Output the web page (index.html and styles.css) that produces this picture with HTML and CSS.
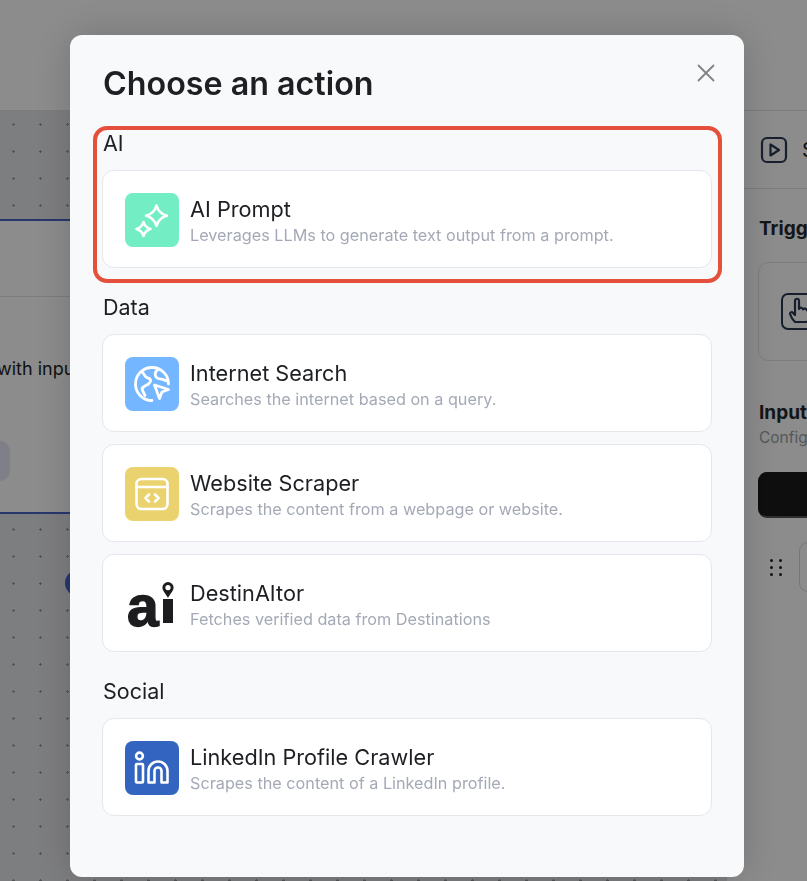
FILE: index.html
```html
<!DOCTYPE html>
<html lang="en">
<head>
    <meta charset="UTF-8">
    <meta name="viewport" content="width=device-width, initial-scale=1.0">
    <title>Choose an action</title>
    <link rel="stylesheet" href="styles.css">
</head>
<body>
    <div class="app">
        <div class="topbar"></div>
        <div class="workspace">
            <div class="canvas">
                <div class="node">
                    <div class="node-head"></div>
                    <div class="node-body">
                        <div class="node-text">with input</div>
                        <div class="node-pill"></div>
                    </div>
                </div>
                <div class="canvas-handle"></div>
            </div>
            <div class="side">
                <div class="side-head">
                    <svg class="side-play" viewBox="0 0 28 28" fill="none" stroke="#2b3a55" stroke-width="2.2" stroke-linejoin="round">
                        <rect x="2" y="2" width="24" height="24" rx="5"/>
                        <path d="M10.5 8.5v11l8.5-5.5z"/>
                    </svg>
                    <span class="side-title">Settings</span>
                </div>
                <div class="side-body">
                    <div class="side-label">Trigger</div>
                    <div class="trigger-card">
                        <div class="trigger-icon">
                            <svg viewBox="0 0 28 28" fill="none" stroke="#2b3a55" stroke-width="2.2" stroke-linecap="round" stroke-linejoin="round">
                                <path d="M8 25c-2-2-4-5-5-8 0-2 2-2.500 3-1l2 2V4c0-3 4-3 4 0v8c1-2 4-1.500 4 .5 1-1.500 4-1 4 1 1-1 3-.5 3 1.500 0 5-1 8-3 10z"/>
                            </svg>
                        </div>
                    </div>
                    <div class="side-label side-label-input">Input</div>
                    <div class="side-hint">Configure</div>
                    <div class="black-btn"></div>
                    <div class="input-row">
                        <div class="drag">
                            <i></i><i></i><i></i><i></i><i></i><i></i>
                        </div>
                        <div class="input-box"></div>
                    </div>
                </div>
            </div>
        </div>
    </div>

    <div class="overlay"></div>

    <div class="modal">
        <div class="modal-head">
            <h1>Choose an action</h1>
            <svg class="close" viewBox="0 0 18 18" fill="none" stroke="#808287" stroke-width="1.800" stroke-linecap="round">
                <path d="M1.500 1.500l15 15M16.500 1.500l-15 15"/>
            </svg>
        </div>

        <div class="section section-marked">
            <div class="section-label">AI</div>
            <div class="action">
                <div class="action-icon icon-ai">
                    <svg viewBox="0 0 54 54" fill="none" stroke="#fff" stroke-width="2.600" stroke-linejoin="round">
                        <path d="M31.500 12.500c1.500 5.500 4.500 8.700 10.500 10.200-6 1.500-9 4.700-10.500 10.300-1.500-5.600-4.500-8.800-10.500-10.300 6-1.500 9-4.700 10.500-10.200z"/>
                        <path d="M18.500 29c1 3.500 3 5.800 7 7-4 1.200-6 3.400-7 7-1-3.600-3-5.800-7-7 4-1.200 6-3.500 7-7z"/>
                    </svg>
                </div>
                <div class="action-text">
                    <div class="action-title">AI Prompt</div>
                    <div class="action-desc">Leverages LLMs to generate text output from a prompt.</div>
                </div>
            </div>
        </div>

        <div class="section">
            <div class="section-label">Data</div>
            <div class="action">
                <div class="action-icon icon-search">
                    <svg viewBox="0 0 54 54" fill="none" stroke="#fff" stroke-width="2.800" stroke-linecap="round" stroke-linejoin="round">
                        <path d="M43.500 27a16.500 16.500 0 1 0-16.500 16.500"/>
                        <path d="M17 14.500l3.500 5c1 1.500 3 1.500 4.500 2.500 1.500 1.500 0 3.500-1.500 5-1.500 1-3.500 1.500-5 3-1.500 1-2 2-1 3.500l2.500 5"/>
                        <path d="M33 12.500c-2.500 2-3.500 5-2 7.500 1.500 2 5 2 7 2.500 1.500.500 3 1.500 4.500 1.500"/>
                        <path d="M29.500 28l14 4.500-6.500 2.500-2.500 6.500z"/>
                    </svg>
                </div>
                <div class="action-text">
                    <div class="action-title">Internet Search</div>
                    <div class="action-desc">Searches the internet based on a query.</div>
                </div>
            </div>
            <div class="action">
                <div class="action-icon icon-web">
                    <svg viewBox="0 0 54 54" fill="none" stroke="#fff" stroke-width="2.600" stroke-linecap="round" stroke-linejoin="round">
                        <rect x="11.500" y="12" width="31" height="30" rx="5"/>
                        <path d="M11.500 20h31"/>
                        <path d="M24 27.500l-3.500 3.500 3.500 3.500M30 27.500l3.500 3.500-3.500 3.500"/>
                    </svg>
                </div>
                <div class="action-text">
                    <div class="action-title">Website Scraper</div>
                    <div class="action-desc">Scrapes the content from a webpage or website.</div>
                </div>
            </div>
            <div class="action">
                <div class="action-icon icon-destin">
                    <span class="destin-mark">a</span>
                    <span class="destin-bar"></span>
                    <svg class="destin-pin" viewBox="0 0 14 20">
                        <path fill-rule="evenodd" fill="#1d1d1f" d="M7 0a7 7 0 0 1 7 7C14 11 9.500 15.500 7 20 4.500 15.500 0 11 0 7A7 7 0 0 1 7 0zm0 3.700a3.300 3.300 0 1 0 0 6.600 3.300 3.300 0 0 0 0-6.600z"/>
                    </svg>
                </div>
                <div class="action-text">
                    <div class="action-title">DestinAItor</div>
                    <div class="action-desc">Fetches verified data from Destinations</div>
                </div>
            </div>
        </div>

        <div class="section">
            <div class="section-label">Social</div>
            <div class="action">
                <div class="action-icon icon-linkedin">
                    <svg viewBox="0 0 54 54" fill="none" stroke="#fff" stroke-width="2.600" stroke-linejoin="round">
                        <circle cx="14.500" cy="15" r="3.400"/>
                        <rect x="11" y="23" width="7" height="18.500" rx="1"/>
                        <path d="M23.500 41.500V30a9.500 9.500 0 0 1 19 0v11.500h-6V30a3.500 3.500 0 0 0-7 0v11.500z"/>
                    </svg>
                </div>
                <div class="action-text">
                    <div class="action-title">LinkedIn Profile Crawler</div>
                    <div class="action-desc">Scrapes the content of a LinkedIn profile.</div>
                </div>
            </div>
        </div>
    </div>
</body>
</html>
```

FILE: styles.css
```css
* {
    box-sizing: border-box;
}
html, body {
    margin: 0;
    padding: 0;
    height: 100%;
    overflow: hidden;
    font-family: Inter, "Liberation Sans", sans-serif;
    color: #1d1f23;
}

/* page behind the dialog */
.app {
    height: 881px;
    display: flex;
    flex-direction: column;
    background-color: #fff;
}
.topbar {
    height: 111px;
    flex: none;
    border-bottom: 1px solid #e1e3e8;
}
.workspace {
    flex: 1;
    display: flex;
    min-height: 0;
}
.canvas {
    width: 726px;
    flex: none;
    padding-top: 108px;
    background-color: #e4e5e8;
    background-image: url("data:image/svg+xml,%3Csvg xmlns='http://www.w3.org/2000/svg' width='27' height='27'%3E%3Cpath d='M12 13.500h3M13.500 12v3' stroke='%239a9ba0' stroke-width='1'/%3E%3C/svg%3E");
    background-position: 0 0;
}
.node {
    height: 295px;
    background-color: #fff;
    border-top: 2px solid #4a63c8;
    border-bottom: 2px solid #4a63c8;
}
.node-head {
    height: 76px;
    border-bottom: 1px solid #e1e3e8;
}
.node-body {
    padding-top: 59px;
}
.node-text {
    font-size: 18px;
    line-height: 26px;
    margin-left: -3px;
    white-space: nowrap;
}
.node-pill {
    width: 10px;
    height: 40px;
    margin-top: 59px;
    background-color: #e6e8f6;
    border-radius: 0 10px 10px 0;
}
.canvas-handle {
    width: 26px;
    height: 26px;
    margin: 56px 0 0 65px;
    border-radius: 50%;
    background-color: #4a63c8;
}

.side {
    flex: 1;
    background-color: #fff;
    border-left: 1px solid #e1e3e8;
    overflow: hidden;
}
.side-head {
    height: 78px;
    display: flex;
    align-items: center;
    gap: 14px;
    padding-left: 33px;
    border-bottom: 1px solid #e1e3e8;
}
.side-play {
    width: 28px;
    height: 28px;
    flex: none;
}
.side-title {
    font-size: 20px;
    white-space: nowrap;
}
.side-body {
    padding: 28px 0 0 31px;
    width: 400px;
}
.side-label {
    margin-left: 1px;
    font-size: 19px;
    font-weight: 700;
    line-height: 24px;
    color: #26282c;
}
.trigger-card {
    width: 300px;
    height: 99px;
    margin-top: 21px;
    padding: 30px 0 0 22px;
    border: 1px solid #e1e3e8;
    border-radius: 10px;
}
.trigger-icon {
    width: 40px;
    height: 37px;
    padding: 2px 4px;
    border: 2px solid #2b3a55;
    border-radius: 7px;
}
.trigger-icon svg {
    display: block;
    width: 28px;
    height: 28px;
}
.side-label-input {
    margin-top: 40px;
}
.side-hint {
    margin-left: 1px;
    font-size: 15.5px;
    line-height: 22px;
    margin-top: 2px;
    color: #9ca0aa;
}
.black-btn {
    width: 300px;
    height: 46px;
    margin-top: 23px;
    border-radius: 9px;
    background-color: #1a1a1a;
    border-bottom: 2px solid #555;
}
.input-row {
    display: flex;
    align-items: center;
    gap: 17px;
    margin-top: 24px;
    padding-left: 12px;
}
.drag {
    width: 12px;
    display: grid;
    grid-template-columns: 3px 3px;
    justify-content: space-between;
    row-gap: 4px;
    flex: none;
}
.drag i {
    width: 3px;
    height: 3px;
    border-radius: 50%;
    background-color: #222;
}
.input-box {
    width: 200px;
    height: 50px;
    border: 1px solid #d5d7dc;
    border-radius: 9px;
}

.overlay {
    position: fixed;
    inset: 0;
    background-color: rgba(0, 0, 0, 0.45);
}

/* dialog */
.modal {
    position: fixed;
    left: 70px;
    top: 35px;
    width: 674px;
    height: 842px;
    padding: 0 32px;
    background-color: #f8f9fb;
    border-radius: 12px;
    box-shadow: 0 0 40px rgba(0, 0, 0, 0.18);
}
.modal-head {
    height: 94px;
    display: flex;
    align-items: flex-start;
    justify-content: space-between;
}
h1 {
    margin: 29px 0 0 1px;
    font-size: 32.25px;
    line-height: 40px;
    font-weight: 600;
    color: #1d1f23;
}
.close {
    width: 18px;
    height: 18px;
    margin-top: 29px;
    position: relative;
    left: 3px;
}
.section {
    margin-bottom: 25px;
}
.section-marked {
    position: relative;
}
.section-marked::before {
    content: "";
    position: absolute;
    left: -9px;
    right: -10px;
    top: -3px;
    bottom: -15px;
    border: 4px solid #e5503c;
    border-radius: 14px;
    pointer-events: none;
}
.section-label {
    margin-left: 1px;
    font-size: 21.5px;
    line-height: 28px;
    margin-bottom: 13px;
}
.action {
    height: 98px;
    width: 610px;
    display: flex;
    align-items: center;
    gap: 11px;
    padding: 2px 0 0 22px;
    margin-bottom: 12px;
    background-color: #fff;
    border: 1px solid #e5e7ec;
    border-radius: 12px;
}
.action:last-child {
    margin-bottom: 0;
}
.action-icon {
    width: 54px;
    height: 54px;
    flex: none;
    border-radius: 8px;
    position: relative;
}
.action-icon svg {
    display: block;
    width: 54px;
    height: 54px;
}
.icon-ai { background-color: #73edc4; }
.icon-search { background-color: #74b6ff; }
.icon-web { background-color: #ead36f; }
.icon-linkedin { background-color: #3264c0; }
.destin-mark {
    position: absolute;
    left: 2px;
    bottom: -2px;
    font-family: "Liberation Sans", sans-serif;
    font-size: 57px;
    line-height: 54px;
    font-weight: 700;
    color: #1d1d1f;
    -webkit-text-stroke: 1.4px #1d1d1f;
}
.destin-bar {
    position: absolute;
    left: 38px;
    top: 22px;
    width: 10px;
    height: 24px;
    background-color: #1d1d1f;
}
.action-icon svg.destin-pin {
    position: absolute;
    left: 37px;
    top: 5px;
    width: 12px;
    height: 16px;
}
.action-text {
    padding-top: 1px;
}
.action-title {
    font-size: 21.7px;
    line-height: 28px;
    color: #1d1f23;
}
.action-desc {
    margin-top: 1px;
    font-size: 16.23px;
    line-height: 22px;
    color: #a4a9b6;
}
```
